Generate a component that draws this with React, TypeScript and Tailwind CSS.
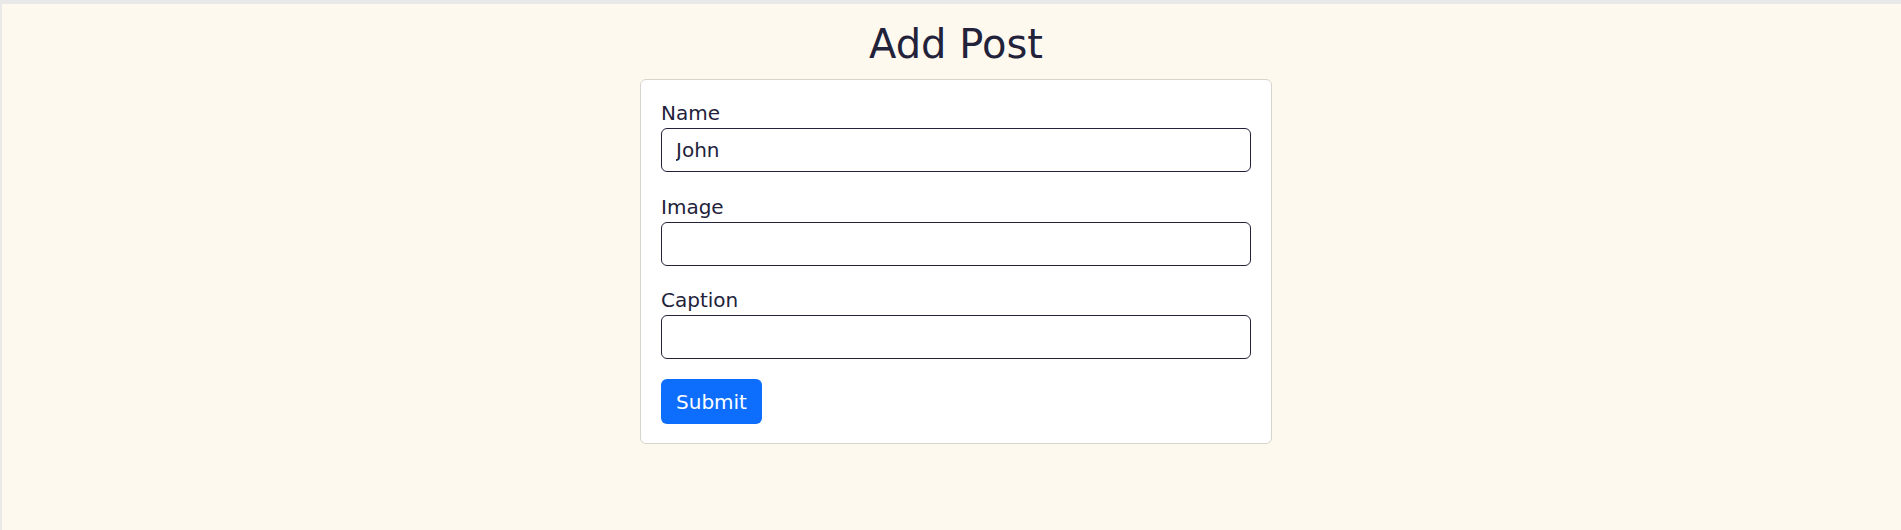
import React from "react";

const font = { fontFamily: '"DejaVu Sans", "Noto Sans", sans-serif' };

function Field({ label, value, className }: { label: string; value?: string; className?: string }) {
  return (
    <div className={"flex flex-col " + (className ?? "")}>
      <label className="text-[20px] leading-[30px] text-[#22223b]">{label}</label>
      <input
        type="text"
        defaultValue={value ?? ""}
        className="h-[44px] w-full rounded-[6px] border border-[#22223b] bg-white px-[14px] text-[20px] leading-[30px] text-[#22223b] outline-none"
        style={font}
      />
    </div>
  );
}

export default function App() {
  return (
    <div className="min-h-[530px] w-full bg-[#e9e9e9] pt-[4px] pl-[2px]" style={font}>
      <div className="flex min-h-[526px] flex-col items-center bg-[#fef9ee] pl-[9px]">
        <h1 className="mt-4 mb-[11px] text-[40px] leading-[48px] font-normal text-[#22223b]">Add Post</h1>
        <div className="flex w-[632px] flex-col rounded-[6px] border border-[#d7d4ce] bg-white px-5 pt-[18px] pb-[19px]">
          <Field label="Name" value="John" />
          <Field label="Image" className="mt-[20px]" />
          <Field label="Caption" className="mt-[19px]" />
          <div className="mt-[20px]">
            <button
              type="button"
              className="flex h-[45px] w-[101px] items-center justify-center rounded-[6px] bg-[#0d6efd] text-[20px] leading-[30px] text-white"
              style={font}
            >
              Submit
            </button>
          </div>
        </div>
      </div>
    </div>
  );
}
